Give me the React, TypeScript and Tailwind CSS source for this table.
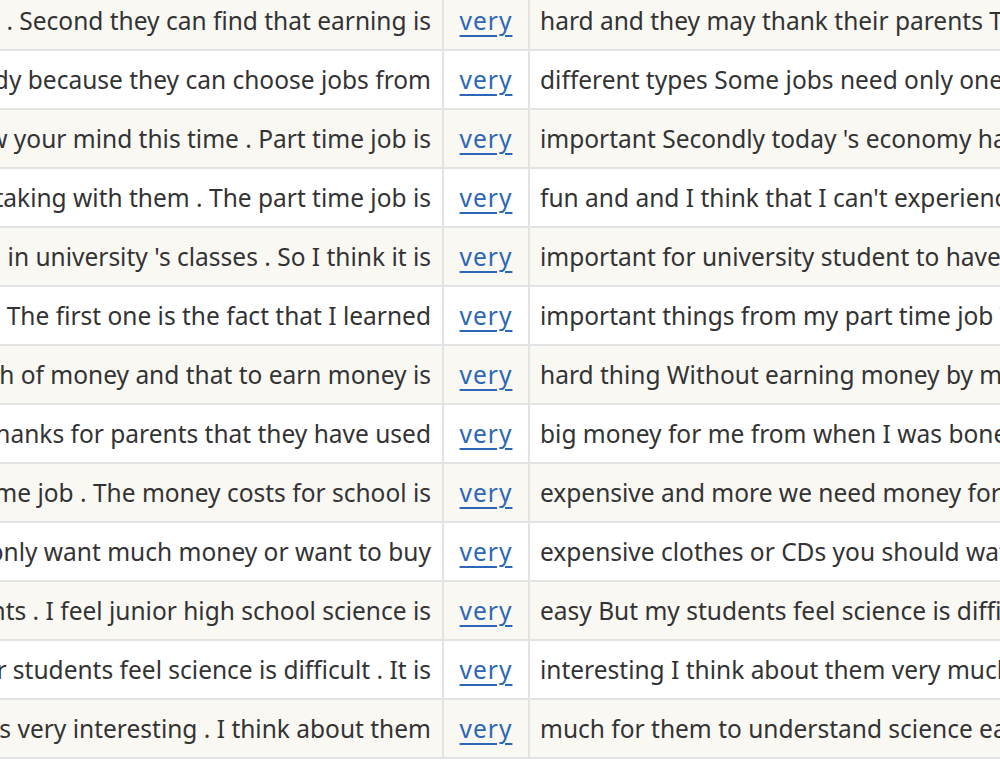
import React from 'react';

const rows = [
  { left: 'for them . Second they can find that earning is', right: 'hard and they may thank their parents That is why' },
  { left: 'easy to study because they can choose jobs from', right: 'different types Some jobs need only one day' },
  { left: 'you can grow your mind this time . Part time job is', right: 'important Secondly today \'s economy has' },
  { left: 'the people I am taking with them . The part time job is', right: 'fun and and I think that I can\'t experience' },
  { left: 'we cannot learn in university \'s classes . So I think it is', right: 'important for university student to have' },
  { left: 'for two reasons . The first one is the fact that I learned', right: 'important things from my part time job The' },
  { left: 'I know the worth of money and that to earn money is', right: 'hard thing Without earning money by my' },
  { left: 'I have to say thanks for parents that they have used', right: 'big money for me from when I was boned' },
  { left: 'do a part time job . The money costs for school is', right: 'expensive and more we need money for' },
  { left: 'However if you only want much money or want to buy', right: 'expensive clothes or CDs you should watch' },
  { left: 'my students . I feel junior high school science is', right: 'easy But my students feel science is difficult' },
  { left: 'But our students feel science is difficult . It is', right: 'interesting I think about them very much' },
  { left: 'science is very interesting . I think about them', right: 'much for them to understand science easily' },
];

export default function App() {
  return (
    <div
      className="w-[1000px] h-[761px] overflow-hidden bg-white text-[#333333] text-[24.5px]"
      style={{ fontFamily: '"Noto Sans", "Noto Sans CJK JP", sans-serif' }}
    >
      <div className="-mt-[8px] flex flex-col">
        {rows.map((row, i) => (
          <div
            key={i}
            className={`flex h-[59px] border-b-2 border-[#e3e3e3] ${i % 2 === 0 ? 'bg-[#f9f8f3]' : 'bg-white'}`}
          >
            <div className="w-[444px] shrink-0 flex items-center justify-end overflow-hidden whitespace-nowrap pt-[2px] pr-[11px] border-r-2 border-[#e3e3e3]">
              <span>{row.left}</span>
            </div>
            <div className="w-[86px] shrink-0 flex items-center justify-center pt-[2px] border-r-2 border-[#e3e3e3]">
              <a href="#" className="text-[#2c66b8] underline underline-offset-[5px] decoration-[2px] tracking-[1px]">very</a>
            </div>
            <div className="flex-1 flex items-center overflow-hidden whitespace-nowrap pt-[2px] pl-[10px]">
              <span>{row.right}</span>
            </div>
          </div>
        ))}
      </div>
    </div>
  );
}
